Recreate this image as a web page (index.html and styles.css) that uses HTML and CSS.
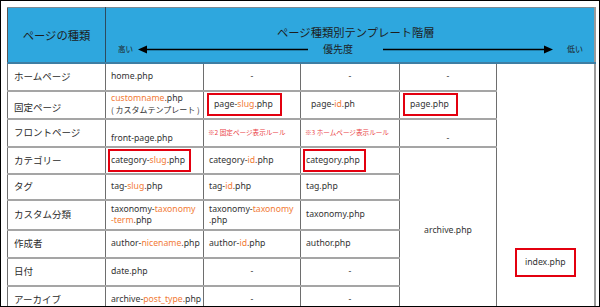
FILE: index.html
```html
<!DOCTYPE html>
<html lang="ja">
<head>
<meta charset="utf-8">
<link rel="stylesheet" href="styles.css">
</head>
<body>
<div class="frame">
<table class="tpl">
<colgroup>
<col class="cw98"><col class="cw98"><col class="cw97"><col class="cw99"><col class="cw97"><col class="cw98">
</colgroup>
<thead>
<tr class="hd">
<th class="kind">ページの種類</th>
<th colspan="5" class="hier">
<div class="title">ページ種類別テンプレート階層</div>
<div class="prio">
<span class="hi">高い</span>
<svg class="arr arr-l" width="170" height="9" viewBox="0 0 170 9"><line x1="8" y1="4.5" x2="170" y2="4.5" stroke="#000" stroke-width="1.4"/><polygon points="0,4.5 9,0.5 9,8.5" fill="#000"/></svg>
<span class="mid">優先度</span>
<svg class="arr arr-r" width="170" height="9" viewBox="0 0 170 9"><line x1="0" y1="4.5" x2="162" y2="4.5" stroke="#000" stroke-width="1.4"/><polygon points="170,4.5 161,0.5 161,8.5" fill="#000"/></svg>
<span class="lo">低い</span>
</div>
</th>
</tr>
</thead>
<tbody>
<tr class="h28">
<td class="lbl">ホームページ</td>
<td>home.php</td>
<td class="ctr">-</td>
<td class="ctr">-</td>
<td class="ctr">-</td>
<td rowspan="9" class="idx"><span class="hl hl-idx">index.php</span></td>
</tr>
<tr class="h28">
<td class="lbl lbl-low">固定ページ</td>
<td class="two"><span class="v">customname</span>.php<br><span class="jp">( カスタムテンプレート )</span></td>
<td><span class="hl hl-wide">page-<span class="v">slug</span>.php</span></td>
<td class="pl-page">page-<span class="v">id</span>.ph</td>
<td><span class="hl hl-wide">page.php</span></td>
</tr>
<tr class="h28">
<td class="lbl">フロントページ</td>
<td class="drop">front-page.php</td>
<td class="note">※2 固定ページ表示ルール</td>
<td class="note">※3 ホームページ表示ルール</td>
<td class="ctr drop">-</td>
</tr>
<tr class="h27">
<td class="lbl">カテゴリー</td>
<td><span class="hl">category-<span class="v">slug</span>.php</span></td>
<td>category-<span class="v">id</span>.php</td>
<td><span class="hl">category.php</span></td>
<td rowspan="6" class="ctr arch">archive.php</td>
</tr>
<tr class="h26">
<td class="lbl">タグ</td>
<td>tag-<span class="v">slug</span>.php</td>
<td>tag-<span class="v">id</span>.php</td>
<td>tag.php</td>
</tr>
<tr class="h30">
<td class="lbl">カスタム分類</td>
<td class="two">taxonomy-<span class="v">taxonomy</span><br><span class="v">-term</span>.php</td>
<td class="two">taxonomy-<span class="v">taxonomy</span><br>.php</td>
<td>taxonomy.php</td>
</tr>
<tr class="h28">
<td class="lbl">作成者</td>
<td>author-<span class="v">nicename</span>.php</td>
<td>author-<span class="v">id</span>.php</td>
<td>author.php</td>
</tr>
<tr class="h28">
<td class="lbl">日付</td>
<td>date.php</td>
<td class="ctr">-</td>
<td class="ctr">-</td>
</tr>
<tr class="h28">
<td class="lbl">アーカイブ</td>
<td>archive-<span class="v">post_type</span>.php</td>
<td class="ctr">-</td>
<td class="ctr">-</td>
</tr>
</tbody>
</table>
</div>
</body>
</html>
```
FILE: styles.css
```css
html, body {
  margin: 0;
  padding: 0;
  background: #fff;
}

.frame {
  width: 600px;
  height: 307px;
  box-sizing: border-box;
  border: 1px solid #000;
  overflow: hidden;
  padding: 6px 0 0 6px;
  background: #fff;
}

.tpl {
  border-collapse: collapse;
  table-layout: fixed;
  width: 588px;
  font-family: "Noto Sans", "Noto Sans CJK JP", sans-serif;
  color: #333;
  border-top: 1px solid #7d8a93;
  border-left: 1px solid #555;
  border-right: 2px solid #9a9a9a;
}

.cw98 { width: 98px; }
.cw97 { width: 97px; }
.cw99 { width: 99px; }

.hd {
  height: 55px;
}

.tpl th {
  background: #2ea7de;
  color: #1d1d1d;
  font-weight: normal;
  font-family: "Noto Sans CJK JP", "Noto Sans", sans-serif;
  border-bottom: 2px solid #3e7ea3;
  padding: 0;
}

.kind {
  font-size: 11.3px;
  text-align: center;
  vertical-align: middle;
  border-right: 1px solid #2d4a5e;
}

.hier {
  vertical-align: top;
  text-align: center;
}

.title {
  font-size: 11.3px;
  line-height: 14px;
  margin-top: 17px;
  padding-left: 12px;
}

.prio {
  display: flex;
  align-items: center;
  margin-top: 4px;
  padding-left: 12px;
  height: 12px;
}

.hi {
  font-size: 7.5px;
  line-height: 10px;
}

.arr {
  display: block;
  flex: none;
}

.arr-l {
  margin-left: 5px;
}

.mid {
  font-size: 10px;
  line-height: 12px;
  margin-left: 15px;
  margin-right: 30px;
}

.arr-r {
  margin-right: 14px;
}

.lo {
  font-size: 8px;
  line-height: 10px;
}

.tpl td {
  border-left: 1px solid #6e6e6e;
  border-right: 1px solid #6e6e6e;
  border-top: 2px solid #a5a5a5;
  border-bottom: 2px solid #a5a5a5;
  padding: 0 3px 0 5px;
  font-size: 8.7px;
  line-height: 11px;
  white-space: nowrap;
  vertical-align: middle;
  text-align: left;
  overflow: hidden;
}

.h28 { height: 28px; }
.h27 { height: 27px; }
.h26 { height: 26px; }
.h30 { height: 30px; }

.tpl td.lbl {
  font-family: "Noto Sans CJK JP", "Noto Sans", sans-serif;
  font-size: 9.5px;
  padding-left: 6px;
  color: #2b2b2b;
}

.tpl td.lbl-low {
  padding-top: 6px;
}

.tpl td.ctr {
  text-align: center;
  padding-left: 3px;
}

.tpl td.drop {
  padding-top: 11px;
}

.tpl td.two {
  line-height: 11px;
}

.jp {
  font-family: "Noto Sans CJK JP", sans-serif;
  font-size: 8px;
}

.v {
  color: #f27b36;
}

.tpl td.note {
  font-family: "Noto Sans CJK JP", sans-serif;
  font-size: 6.6px;
  color: #ea3f46;
  padding-left: 4px;
}

.tpl td.pl-page {
  padding-left: 10px;
}

.hl {
  display: inline-block;
  border: 2px solid #e3000f;
  padding: 4px 4px 4px 1px;
  margin-left: -3px;
  line-height: 11px;
}

.hl-wide {
  padding-left: 5px;
  padding-right: 7px;
  margin-left: -2px;
}

.tpl td.idx {
  vertical-align: top;
  text-align: center;
  padding: 184px 0 0 0;
}

.hl-idx {
  padding: 7px 8px;
  margin-left: 0;
}
```
